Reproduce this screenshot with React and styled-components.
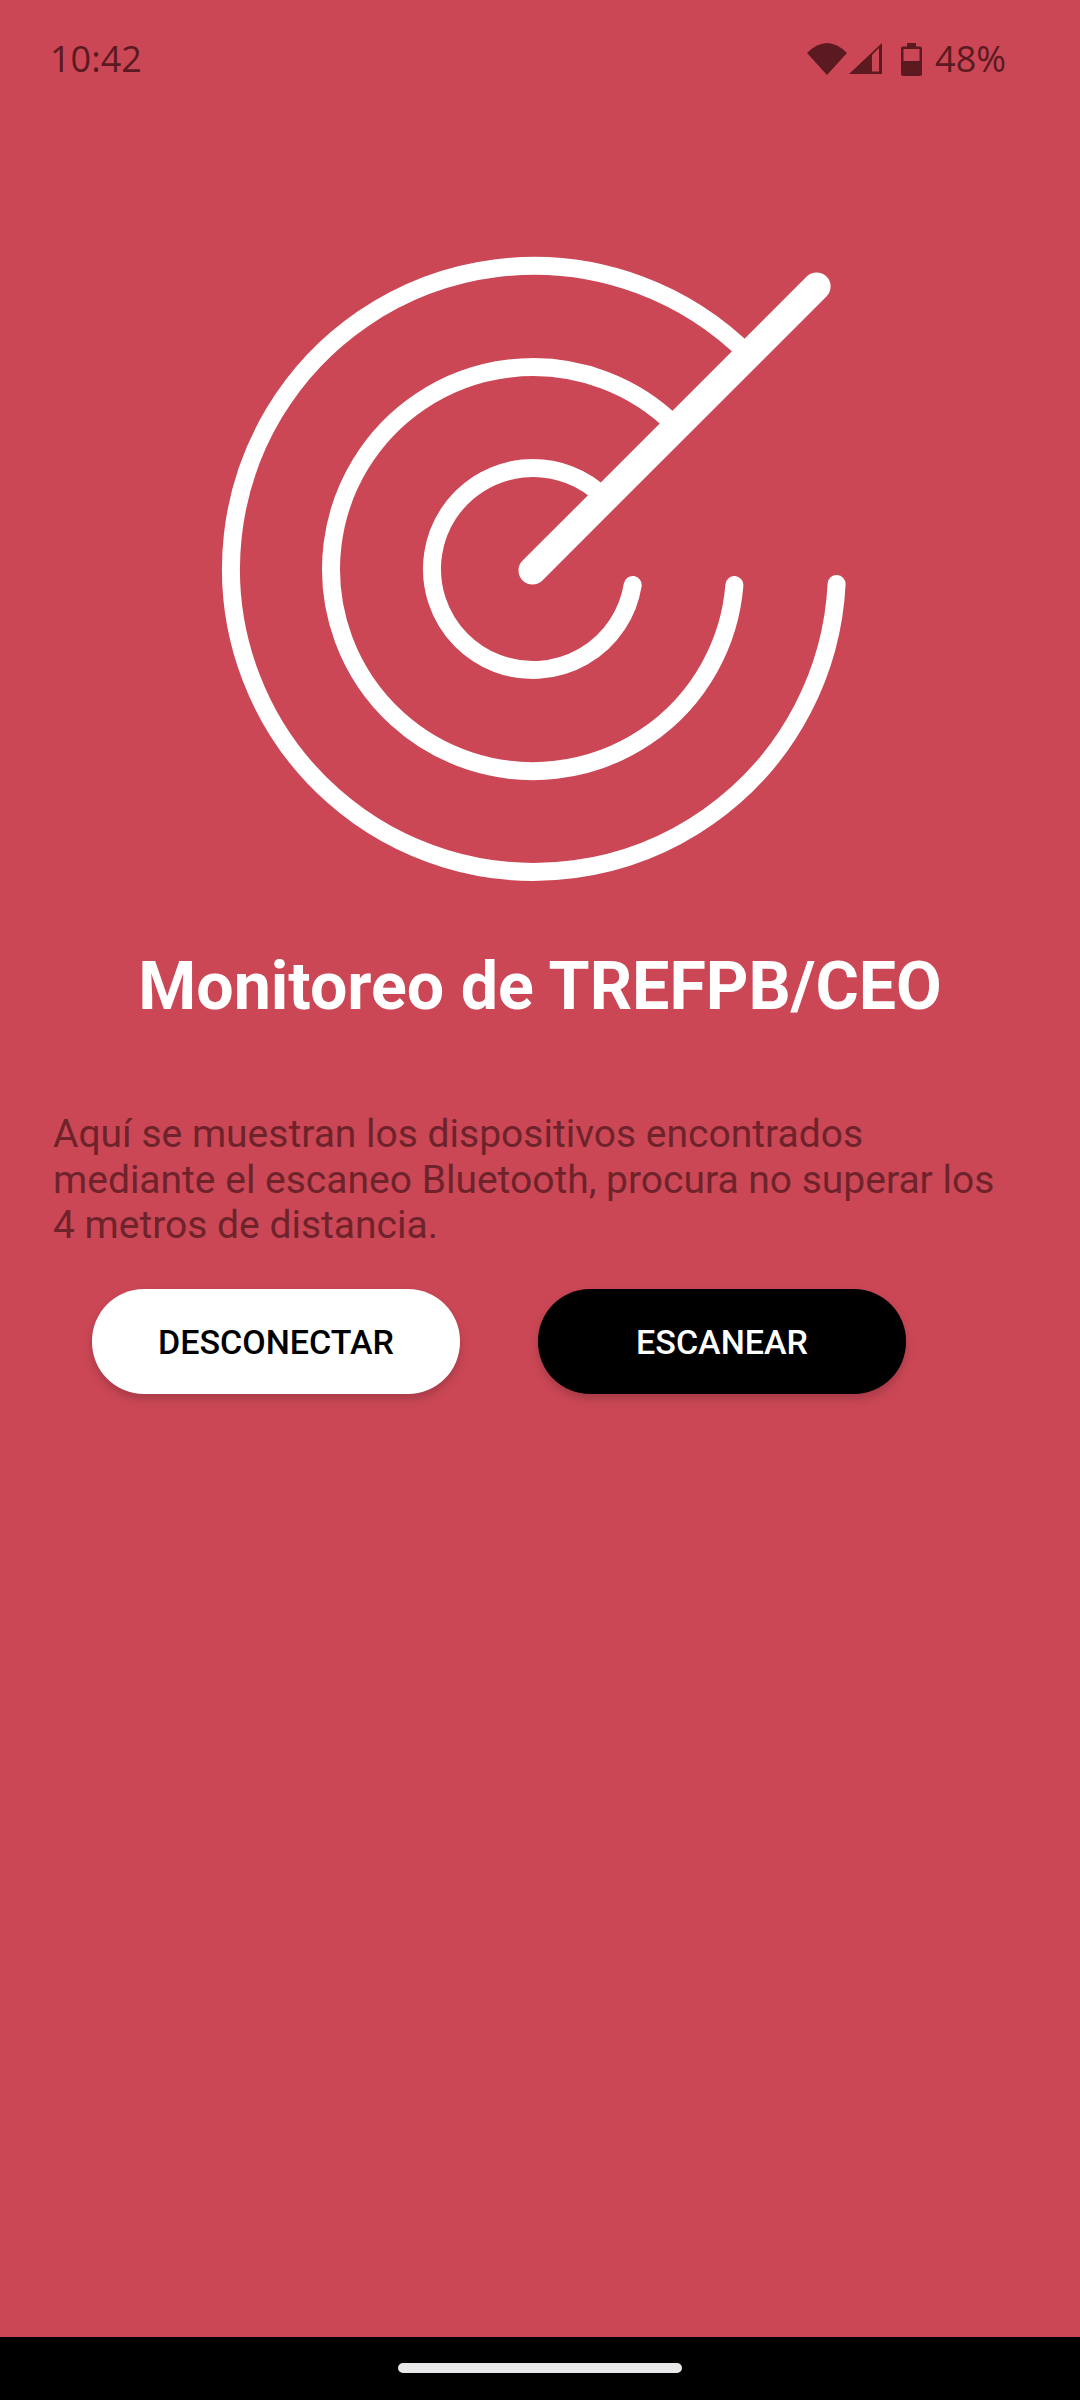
import React from 'react';
import styled, { createGlobalStyle } from 'styled-components';

const Global = createGlobalStyle`
  html, body {
    margin: 0;
    padding: 0;
    background: #cb4756;
  }
  * {
    box-sizing: border-box;
  }
`;

function Wifi() {
  return (
    <svg width="40" height="32" viewBox="0 0 40 32">
      <path d="M0 10Q20 -10 40 10L20 32Z" fill="#5a1a20" />
    </svg>
  );
}

function Signal() {
  return (
    <svg width="33" height="31" viewBox="0 0 33 31">
      <path
        fillRule="evenodd"
        d="M33 0V31H0ZM23 12V28.5H30V5Z"
        fill="#5a1a20"
      />
    </svg>
  );
}

function Battery() {
  return (
    <svg width="21" height="33" viewBox="0 0 21 33">
      <path
        fillRule="evenodd"
        d="M6 0H15V3.5H19A2 2 0 0 1 21 5.5V31A2 2 0 0 1 19 33H2A2 2 0 0 1 0 31V5.5A2 2 0 0 1 2 3.5H6ZM2.5 6V18H18.5V6Z"
        fill="#5a1a20"
      />
    </svg>
  );
}

function Radar() {
  return (
    <svg width="640" height="640" viewBox="0 0 640 640">
      <g fill="none" stroke="#fff" strokeWidth="18" strokeLinecap="round">
        <path d="M528.3 106.7A303 303 0 1 0 616.6 336" />
        <path d="M455.8 178.2A202 202 0 1 0 514.4 337" />
        <path d="M384.4 249.6A101 101 0 1 0 412.7 337" />
      </g>
      <path
        d="M312.5 322.5L596.6 38.5"
        fill="none"
        stroke="#fff"
        strokeWidth="28"
        strokeLinecap="round"
      />
    </svg>
  );
}

export default function App() {
  return (
    <>
      <Global />
      <Screen>
        <StatusBar>
          <Clock>10:42</Clock>
          <StatusIcons>
            <Wifi />
            <Signal />
            <BatterySlot>
              <Battery />
            </BatterySlot>
            <Percent>48%</Percent>
          </StatusIcons>
        </StatusBar>
        <Main>
          <LogoWrap>
            <Radar />
          </LogoWrap>
          <Title>Monitoreo de TREFPB/CEO</Title>
          <Description>
            Aquí se muestran los dispositivos encontrados
            <br />
            mediante el escaneo Bluetooth, procura no superar los
            <br />4 metros de distancia.
          </Description>
          <Buttons>
            <PillButton>DESCONECTAR</PillButton>
            <PillButton $dark>ESCANEAR</PillButton>
          </Buttons>
        </Main>
        <NavBar>
          <HomePill />
        </NavBar>
      </Screen>
    </>
  );
}

const Screen = styled.div`
  width: 1080px;
  height: 2400px;
  display: flex;
  flex-direction: column;
  background-color: #cb4756;
  font-family: Roboto, 'Liberation Sans', sans-serif;
  overflow: hidden;
`;

const StatusBar = styled.div`
  height: 118px;
  padding: 43px 74px 0 50px;
  display: flex;
  justify-content: space-between;
  align-items: flex-start;
  color: #5a1a20;
`;

const Clock = styled.span`
  font-family: 'Open Sans', Roboto, sans-serif;
  font-size: 36px;
  line-height: 31px;
`;

const StatusIcons = styled.div`
  display: flex;
  align-items: flex-start;
  gap: 2px;
`;

const BatterySlot = styled.div`
  display: flex;
  margin: 0 11px 0 17px;
`;

const Percent = styled.span`
  font-family: 'Open Sans', Roboto, sans-serif;
  font-size: 36px;
  line-height: 31px;
`;

const Main = styled.main`
  flex: 1;
  display: flex;
  flex-direction: column;
`;

const LogoWrap = styled.div`
  display: flex;
  padding: 130px 0 0 220px;
`;

const Title = styled.h1`
  margin: 59px 0 0;
  text-align: center;
  color: #fff;
  font-size: 66.3px;
  line-height: 78px;
  font-weight: 700;
`;

const Description = styled.p`
  margin: 87px 0 0;
  padding-left: 53px;
  color: #6e232b;
  font-size: 39px;
  line-height: 45.5px;
  font-weight: 400;
  white-space: nowrap;
`;

const Buttons = styled.div`
  display: flex;
  gap: 78px;
  margin-top: 40px;
  padding-left: 92px;
`;

const PillButton = styled.button`
  width: 368px;
  height: 105px;
  padding: 1px 0 0;
  border: 0;
  border-radius: 52px;
  background-color: ${(props) => (props.$dark ? '#000' : '#fff')};
  color: ${(props) => (props.$dark ? '#fff' : '#000')};
  font-family: Roboto, sans-serif;
  font-size: 34px;
  font-weight: 500;
  box-shadow: 0 5px 10px rgba(0, 0, 0, 0.18);
`;

const NavBar = styled.div`
  height: 63px;
  display: flex;
  justify-content: center;
  padding-top: 26px;
  background-color: #000;
`;

const HomePill = styled.div`
  width: 284px;
  height: 10px;
  border-radius: 5px;
  background-color: #e8e8ea;
`;
